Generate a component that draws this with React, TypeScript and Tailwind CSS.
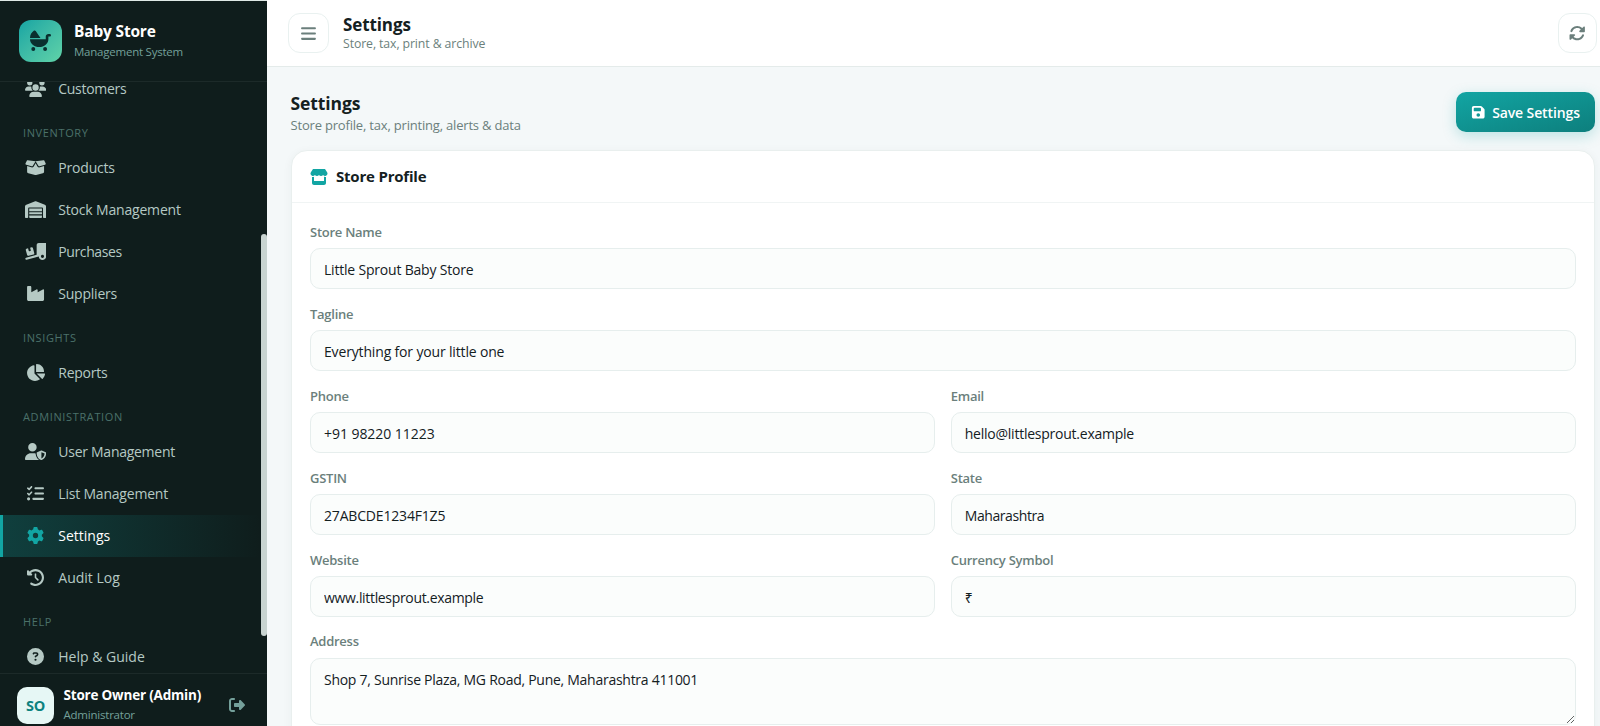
import type { ComponentType, ReactNode } from 'react';
import {
  FaBabyCarriage,
  FaBars,
  FaBoxOpen,
  FaChartPie,
  FaCircleQuestion,
  FaClockRotateLeft,
  FaFloppyDisk,
  FaGear,
  FaIndustry,
  FaListCheck,
  FaRightFromBracket,
  FaRotate,
  FaStore,
  FaTruckRampBox,
  FaUserShield,
  FaUsers,
  FaWarehouse,
} from 'react-icons/fa6';

type Item = {
  label: string;
  icon: ComponentType<{ className?: string }>;
  size: string;
  tracking: string;
  active?: boolean;
};

type Group = { title?: string; items: Item[] };

// Icon glyphs share one height, so the wider ones get a larger box.
const regular = 'size-[17px]';
const wide = 'size-[19.1px]';
const extraWide = 'size-[21.2px]';

const groups: Group[] = [
  { items: [{ label: 'Customers', icon: FaUsers, size: extraWide, tracking: 'tracking-[-0.3px]' }] },
  {
    title: 'INVENTORY',
    items: [
      { label: 'Products', icon: FaBoxOpen, size: extraWide, tracking: 'tracking-[-0.2px]' },
      { label: 'Stock Management', icon: FaWarehouse, size: extraWide, tracking: 'tracking-[-0.18px]' },
      { label: 'Purchases', icon: FaTruckRampBox, size: extraWide, tracking: 'tracking-[-0.39px]' },
      { label: 'Suppliers', icon: FaIndustry, size: wide, tracking: 'tracking-[-0.22px]' },
    ],
  },
  {
    title: 'INSIGHTS',
    items: [{ label: 'Reports', icon: FaChartPie, size: wide, tracking: 'tracking-[-0.27px]' }],
  },
  {
    title: 'ADMINISTRATION',
    items: [
      { label: 'User Management', icon: FaUserShield, size: extraWide, tracking: 'tracking-[-0.27px]' },
      { label: 'List Management', icon: FaListCheck, size: regular, tracking: 'tracking-[-0.2px]' },
      { label: 'Settings', icon: FaGear, size: regular, tracking: 'tracking-normal', active: true },
      { label: 'Audit Log', icon: FaClockRotateLeft, size: regular, tracking: 'tracking-normal' },
    ],
  },
  {
    title: 'HELP',
    items: [{ label: 'Help & Guide', icon: FaCircleQuestion, size: regular, tracking: 'tracking-normal' }],
  },
];

function NavItem({ item }: { item: Item }) {
  const Icon = item.icon;
  return (
    <a
      className={
        'flex h-[41.95px] items-center gap-3 border-l-3 pl-[21.3px] text-[14px] ' +
        (item.active
          ? 'border-[#12a5a3] bg-linear-to-r from-[#12a5a3]/25 to-transparent text-white'
          : 'border-transparent text-[#b5c9c4]')
      }
    >
      <span className={'flex w-[22px] justify-center ' + (item.active ? 'text-[#12a5a3]' : '')}>
        <Icon className={'shrink-0 ' + item.size} />
      </span>
      <span className={item.tracking}>{item.label}</span>
    </a>
  );
}

function Sidebar() {
  return (
    <aside className="flex w-[267px] shrink-0 flex-col border-t border-[#dfe9e6] bg-[#0f1d1c] bg-clip-padding">
      <div className="flex h-[81px] shrink-0 items-center gap-[12.5px] border-b border-[#1c2a29] pl-[19px]">
        <div className="flex size-[42.5px] items-center justify-center rounded-xl bg-linear-to-br from-[#12a5a3] to-[#5fd3a8] text-[21px] text-[#0a2f2e]">
          <FaBabyCarriage className="-mt-0.5" />
        </div>
        <div>
          <div className="text-[15.5px] leading-[21px] font-bold tracking-[-0.18px] text-white">Baby Store</div>
          <div className="text-[11.5px] leading-5 tracking-[-0.23px] text-[#74a09a]">Management System</div>
        </div>
      </div>
      <div className="flex min-h-0 flex-1">
        <nav className="flex min-w-0 flex-1 flex-col overflow-hidden">
          <div className="-mt-[14.6px]">
            {groups.map((g, i) => (
              <div key={i}>
                {g.title && (
                  <div className="h-[37.3px] pt-[15.3px] pl-[23px] text-[11px] leading-4 tracking-[0.63px] text-[#4b716a]">
                    {g.title}
                  </div>
                )}
                {g.items.map((it) => (
                  <NavItem key={it.label} item={it} />
                ))}
              </div>
            ))}
          </div>
        </nav>
        <div className="w-1.5 shrink-0 pt-[152px]">
          <div className="h-[402px] rounded-full bg-[#c8d4d1]" />
        </div>
      </div>
      <div className="flex h-[53px] shrink-0 border-t border-[#1c2a29] pt-[13px] pl-[17px]">
        <div className="flex size-[37px] shrink-0 items-center justify-center rounded-[10px] bg-[#e6f7f5] text-[14.5px] font-bold tracking-[-0.3px] text-[#0d827f]">
          SO
        </div>
        <div className="-mt-0.5 ml-[9.5px] w-[165px]">
          <div className="text-[13.5px] leading-5 font-bold tracking-[-0.2px] text-white">Store Owner (Admin)</div>
          <div className="text-[11.5px] leading-5 tracking-[-0.22px] text-[#74a09a]">Administrator</div>
        </div>
        <FaRightFromBracket className="mt-2.5 size-4 text-[#74a09a]" />
      </div>
    </aside>
  );
}

function Field({ label, children }: { label: string; children: ReactNode }) {
  return (
    <label className="block">
      <span className="block h-[25.3px] text-[13px] leading-[19px] font-semibold tracking-[-0.26px] text-[#6b7f7c]">
        {label}
      </span>
      {children}
    </label>
  );
}

function TextField({ label, value, tracking }: { label: string; value: string; tracking: string }) {
  return (
    <Field label={label}>
      <input
        defaultValue={value}
        className={
          'block h-[41.2px] w-full rounded-[10px] border border-[#e6eeed] bg-[#fbfdfc] px-[13px] pt-[1.5px] text-[14px] text-[#14201f] outline-none ' +
          tracking
        }
      />
    </Field>
  );
}

function Topbar() {
  return (
    <header className="flex h-[67px] shrink-0 items-center border-b border-[#e4ebea] bg-white pr-[3px] pl-[21px]">
      <button className="flex h-10 w-[40.5px] items-center justify-center rounded-xl border border-[#e9f1f0] bg-white text-[17px] text-[#6b7f7c]">
        <FaBars />
      </button>
      <div className="ml-[14.5px] pt-px">
        <div className="text-[17px] leading-5 font-bold tracking-[-0.1px] text-[#14201f]">Settings</div>
        <div className="text-[12.3px] leading-[18px] tracking-[-0.11px] text-[#6b7f7c]">Store, tax, print &amp; archive</div>
      </div>
      <button className="ml-auto flex h-10 w-[39.5px] items-center justify-center rounded-xl border border-[#e9f1f0] bg-white text-[16.4px] text-[#6b7f7c]">
        <FaRotate />
      </button>
    </header>
  );
}

export default function App() {
  return (
    <div className="flex h-[726px] w-[1600px] overflow-hidden bg-[#f4f8f9] font-['Open_Sans','Noto_Sans',sans-serif]">
      <Sidebar />
      <div className="flex min-w-0 flex-1 flex-col">
        <Topbar />
        <main className="min-h-0 flex-1 overflow-hidden pt-[25px] pr-[5px] pl-[23.5px]">
          <div className="flex h-[58px] items-start justify-between">
            <div className="-mt-px">
              <h1 className="text-[17.5px] leading-[25px] font-bold tracking-[-0.1px] text-[#14201f]">Settings</h1>
              <p className="text-[13px] leading-[18px] tracking-[-0.19px] text-[#6b7f7c]">
                Store profile, tax, printing, alerts &amp; data
              </p>
            </div>
            <button className="flex h-10 w-[139px] items-center justify-center gap-[6.5px] rounded-[10px] bg-linear-to-br from-[#12a5a3] to-[#0d7f7d] pt-px text-[14px] font-semibold tracking-[-0.12px] text-white shadow-[0_4px_14px_rgba(18,165,163,0.25)]">
              <FaFloppyDisk className="size-[14.5px]" />
              Save Settings
            </button>
          </div>
          <section className="h-[640px] rounded-2xl border border-[#e9efee] bg-white shadow-[0_2px_10px_rgba(15,60,58,0.05)]">
            <div className="flex h-[52px] items-center gap-2 border-b border-[#f0f4f4] pl-[18.5px] text-[15px] font-bold tracking-[-0.2px] text-[#14201f]">
              <FaStore className="size-[18px] text-[#12a5a3]" />
              Store Profile
            </div>
            <div className="grid grid-cols-2 gap-x-4 gap-y-[15.4px] px-[18.5px] pt-5">
              <div className="col-span-2">
                <TextField label="Store Name" value="Little Sprout Baby Store" tracking="tracking-[-0.2px]" />
              </div>
              <div className="col-span-2">
                <TextField label="Tagline" value="Everything for your little one" tracking="tracking-[-0.16px]" />
              </div>
              <TextField label="Phone" value="+91 98220 11223" tracking="tracking-[-0.05px]" />
              <TextField label="Email" value="hello@littlesprout.example" tracking="tracking-[-0.24px]" />
              <TextField label="GSTIN" value="27ABCDE1234F1Z5" tracking="tracking-[-0.18px]" />
              <TextField label="State" value="Maharashtra" tracking="tracking-[-0.42px]" />
              <TextField label="Website" value="www.littlesprout.example" tracking="tracking-[-0.33px]" />
              <TextField label="Currency Symbol" value="₹" tracking="tracking-normal" />
              <div className="col-span-2">
                <Field label="Address">
                  <textarea
                    defaultValue="Shop 7, Sunrise Plaza, MG Road, Pune, Maharashtra 411001"
                    className="block h-[67px] w-full resize rounded-[10px] border border-[#e6eeed] bg-[#fbfdfc] px-[13px] py-[10px] text-[14px] leading-[21px] tracking-[-0.27px] text-[#14201f] outline-none"
                  />
                </Field>
              </div>
            </div>
          </section>
        </main>
      </div>
    </div>
  );
}
